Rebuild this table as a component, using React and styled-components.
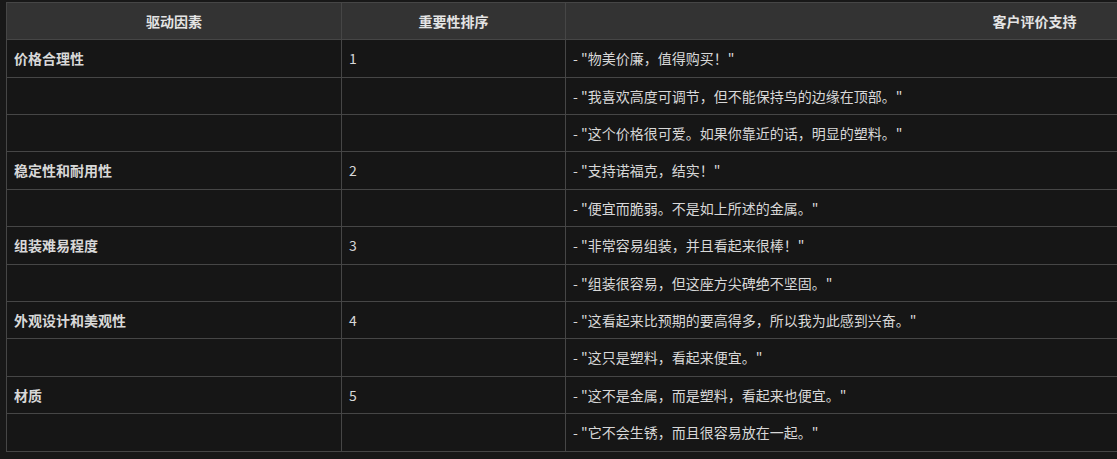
import styled, { createGlobalStyle } from "styled-components";

const GlobalStyle = createGlobalStyle`
    html, body {
        margin: 0;
        background: #181818;
        overflow: hidden;
    }
    body {
        font-family: "Noto Sans CJK SC", "Noto Sans", sans-serif;
        color: #dcdcdc;
    }
`;

const rows = [
    { driver: "价格合理性", rank: "1", quote: "物美价廉，值得购买！" },
    { quote: "我喜欢高度可调节，但不能保持鸟的边缘在顶部。" },
    { quote: "这个价格很可爱。如果你靠近的话，明显的塑料。" },
    { driver: "稳定性和耐用性", rank: "2", quote: "支持诺福克，结实！" },
    { quote: "便宜而脆弱。不是如上所述的金属。" },
    { driver: "组装难易程度", rank: "3", quote: "非常容易组装，并且看起来很棒！" },
    { quote: "组装很容易，但这座方尖碑绝不坚固。" },
    { driver: "外观设计和美观性", rank: "4", quote: "这看起来比预期的要高得多，所以我为此感到兴奋。" },
    { quote: "这只是塑料，看起来便宜。" },
    { driver: "材质", rank: "5", quote: "这不是金属，而是塑料，看起来也便宜。" },
    { quote: "它不会生锈，而且很容易放在一起。" },
];

const App = () => {
    return (
        <>
            <GlobalStyle />
            <Page>
                <Table>
                    <colgroup>
                        <col style={{ width: 335 }} />
                        <col style={{ width: 224 }} />
                        <col style={{ width: 938 }} />
                    </colgroup>
                    <thead>
                        <tr>
                            <Th>驱动因素</Th>
                            <Th>重要性排序</Th>
                            <Th>客户评价支持</Th>
                        </tr>
                    </thead>
                    <tbody>
                        {rows.map((r, i) => (
                            <tr key={i}>
                                <Td $bold>{r.driver || ""}</Td>
                                <Td>{r.rank || ""}</Td>
                                <Td>- "{r.quote}"</Td>
                            </tr>
                        ))}
                    </tbody>
                </Table>
            </Page>
        </>
    );
};

export default App;

const Page = styled.main`
    padding: 2px 0 0 6px;
    width: 1600px;
`;

const Table = styled.table`
    border-collapse: collapse;
    table-layout: fixed;
    width: 1497px;
    font-size: 14px;
    line-height: 20.4px;
`;

const Th = styled.th`
    background: #333333;
    color: #e4e4e4;
    font-weight: 700;
    text-align: center;
    padding: 7.9px 8px;
    border: 1px solid #464646;
`;

const Td = styled.td`
    background: #161616;
    color: #d8d8d8;
    font-weight: ${({ $bold }) => ($bold ? 700 : 400)};
    padding: 8px 7px;
    border: 1px solid #464646;
    white-space: nowrap;
`;
